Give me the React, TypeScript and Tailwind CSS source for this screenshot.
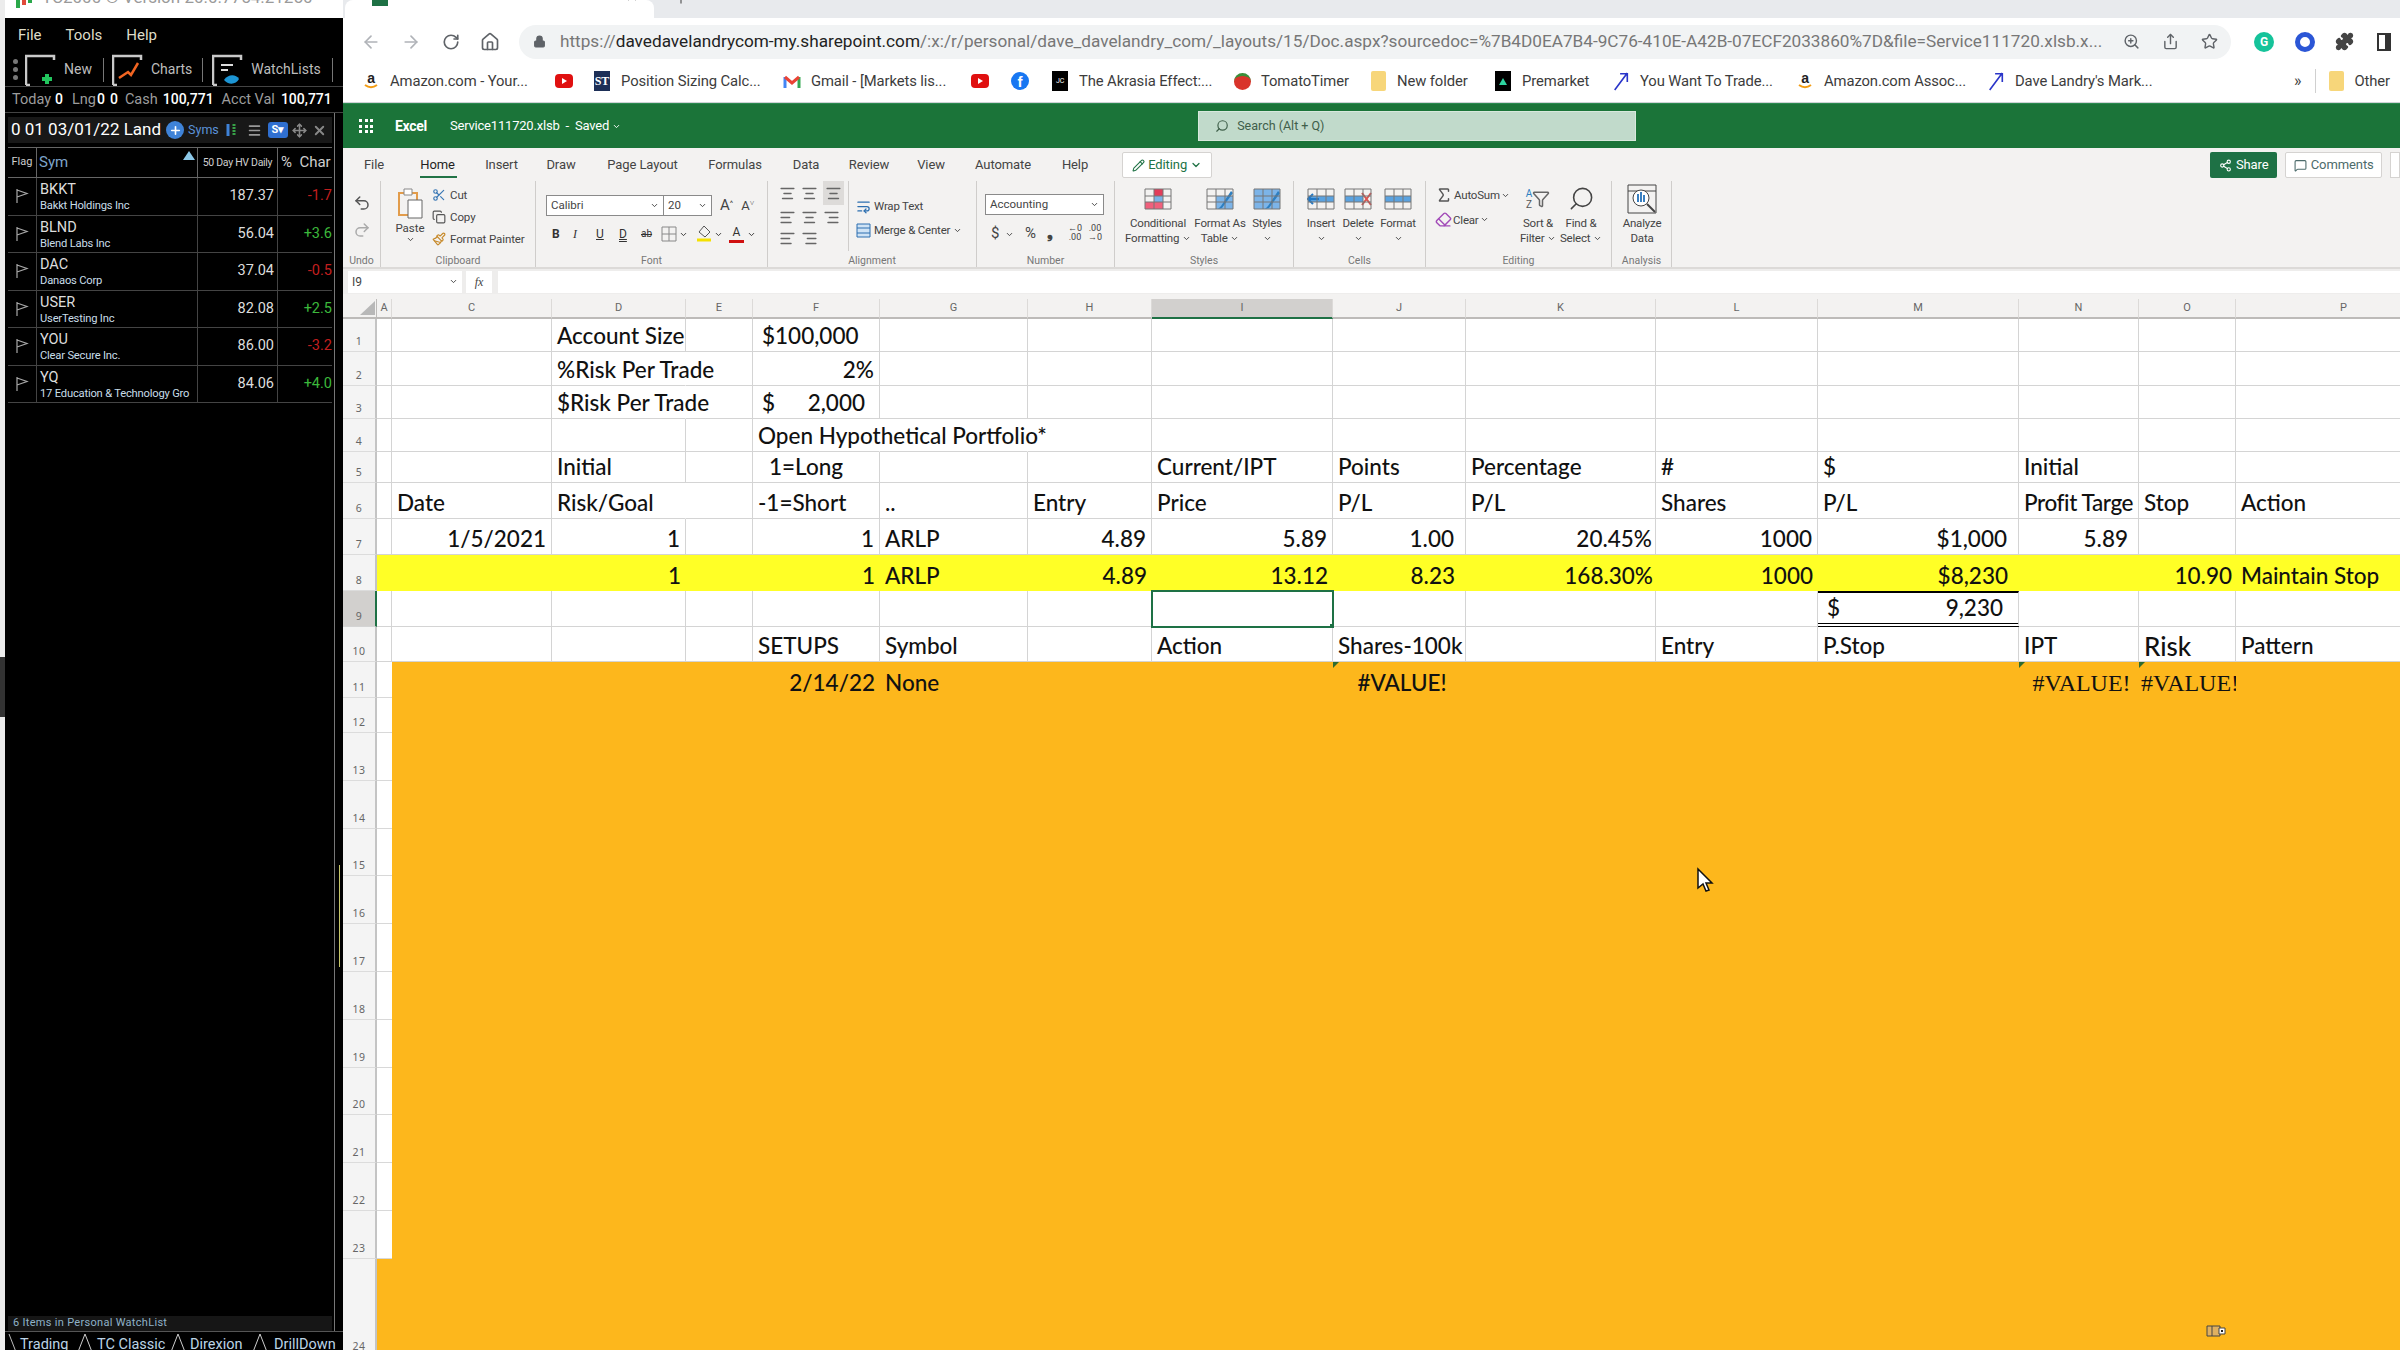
import { ReactNode } from "react"
import {
  ArrowLeft, ArrowRight, RotateCw, Home, Lock, ZoomIn, Share, Star, Puzzle, ChevronDown, Search,
  Undo2, Redo2, Scissors, Copy, Paintbrush, WrapText, Pencil, Share2, MessageSquare, Eraser,
  AlignCenter, AlignLeft, AlignRight, Menu, Move, X, Plus, Sigma, Filter,
} from "lucide-react"

// ---------- left panel data ----------
const watchRows = [
  { sym: "BKKT", name: "Bakkt Holdings Inc", hv: "187.37", chg: "-1.7" },
  { sym: "BLND", name: "Blend Labs Inc", hv: "56.04", chg: "+3.6" },
  { sym: "DAC", name: "Danaos Corp", hv: "37.04", chg: "-0.5" },
  { sym: "USER", name: "UserTesting Inc", hv: "82.08", chg: "+2.5" },
  { sym: "YOU", name: "Clear Secure Inc.", hv: "86.00", chg: "-3.2" },
  { sym: "YQ", name: "17 Education & Technology Gro", hv: "84.06", chg: "+4.0" },
]

function FlagIcon() {
  return (
    <svg width="14" height="16" viewBox="0 0 14 16" fill="none" stroke="#a8a8a8" strokeWidth="1.2">
      <path d="M2 1v14M2 2l10 3.5L2 9" />
    </svg>
  )
}

function Bracket({ children }: { children: ReactNode }) {
  return (
    <svg width="32" height="32" viewBox="0 0 32 32" fill="none">
      <path d="M1 31V2h28v4M1 31h4" stroke="#c9c9c9" strokeWidth="2.5" />
      {children}
    </svg>
  )
}

function LeftPanel() {
  return (
    <div className="flex h-full w-[343px] shrink-0">
      <div className="flex w-[5px] flex-col bg-[#ececec]">
        <div className="h-[657px]" />
        <div className="h-[60px] bg-[#333333]" />
      </div>
      <div className="flex h-full w-[338px] flex-col bg-black font-[Roboto] text-[#e0e0e0]">
        <div className="flex h-[18px] items-start overflow-hidden bg-white pl-[10px] text-[17px] leading-[20px] text-[#9a9a9a]">
          <svg className="mr-[9px] shrink-0" width="18" height="8" viewBox="0 0 18 8"><path d="M1 0h4v8H1z" fill="#2aa84a" /><path d="M7 0h4v5H7z" fill="#e04a3a" /><path d="M13 0h4v3h-4z" fill="#2aa84a" /></svg>
          <span className="-translate-y-[13px]">TC2000 © Version 20.0.7754.21250</span>
        </div>
        <div className="flex h-[35px] items-center gap-[24px] pl-[13px] text-[15px] text-[#dedcc8]">
          <span>File</span><span>Tools</span><span>Help</span>
        </div>
        <div className="flex h-[34px] items-center border-b border-[#444] pl-[8px] text-[14px] text-[#bdbdbd]">
          <div className="mr-[7px] flex flex-col gap-[3px]">
            <i className="size-[5px] rounded-full bg-[#777]" /><i className="size-[5px] rounded-full bg-[#777]" /><i className="size-[5px] rounded-full bg-[#777]" />
          </div>
          <Bracket><path d="M22 20v10M17 25h10" stroke="#22c55e" strokeWidth="4" /></Bracket>
          <span className="ml-[7px] mr-[11px]">New</span>
          <i className="mr-[8px] h-[24px] w-px bg-[#777]" />
          <Bracket><path d="M7 24l9-6 3 3 7-12" stroke="#f26522" strokeWidth="2.5" /></Bracket>
          <span className="ml-[7px] mr-[10px]">Charts</span>
          <i className="mr-[9px] h-[24px] w-px bg-[#777]" />
          <Bracket>
            <path d="M9 11h12M9 16h7" stroke="#ddd" strokeWidth="2" />
            <path d="M12 26c4-6 12-6 15-1-3 6-11 6-15 1z" fill="#1c95d4" />
          </Bracket>
          <span className="ml-[7px] mr-[11px]">WatchLists</span>
          <i className="h-[24px] w-px bg-[#777]" />
        </div>
        <div className="flex h-[26px] items-center whitespace-nowrap border-b border-[#444] pl-[7px] text-[14.5px] text-[#9c9c9c]">
          <span>Today</span><b className="ml-[4px] text-[14px] font-medium text-white">0</b>
          <span className="ml-[9px]">Lng</span><b className="ml-[1px] text-[14px] font-medium text-white">0</b><b className="ml-[5px] text-[14px] font-medium text-white">0</b>
          <span className="ml-[7px]">Cash</span><b className="ml-[5px] text-[14px] font-medium text-white">100,771</b>
          <span className="ml-[8px]">Acct Val</span><b className="ml-[6px] text-[14px] font-medium text-white">100,771</b>
        </div>
        <div className="flex min-h-0 flex-1 border-r-0">
          <div className="flex w-[330px] flex-col border-r border-[#777]">
            <div className="ml-[3px] mt-[4px] flex h-[26px] w-[324px] items-center bg-[#181818] pl-[3px]">
              <span className="whitespace-nowrap text-[17px] text-white">0 01 03/01/22 Land</span>
              <span className="ml-[5px] flex size-[18px] items-center justify-center rounded-full bg-[#3f83d8]"><Plus size={13} strokeWidth={3} color="#fff" /></span>
              <span className="ml-[4px] text-[12.5px] text-[#5b93d8]">Syms</span>
              <svg className="ml-[6px]" width="14" height="14" viewBox="0 0 14 14">
                <path d="M3 1v12" stroke="#3f83d8" strokeWidth="3" /><path d="M9 1v12" stroke="#37a047" strokeWidth="3" strokeDasharray="2 1" />
              </svg>
              <Menu className="ml-[8px]" size={15} color="#999" strokeWidth={2.5} />
              <span className="ml-[6px] flex h-[16px] w-[20px] items-center justify-center rounded-[3px] bg-[#2f6fd0] text-[11px] font-bold text-white">S▾</span>
              <Move className="ml-[4px]" size={15} color="#888" strokeWidth={2.5} />
              <X className="ml-[5px]" size={15} color="#888" strokeWidth={3} />
            </div>
            <div className="ml-[3px] mt-[4px] flex h-[31px] w-[324px] border-y border-[#666] text-[#cfcfcf]">
              <div className="flex w-[29px] items-center justify-center border-r border-[#666] text-[11px]">Flag</div>
              <div className="relative flex w-[161px] items-center border-r border-[#666] pl-[2px] text-[15px] text-[#7da4c9]">
                Sym
                <i className="absolute right-[2px] top-[3px] h-0 w-0 border-x-[6px] border-b-[9px] border-x-transparent border-b-[#8cc8e8]" />
              </div>
              <div className="flex w-[80px] items-center justify-center whitespace-nowrap border-r border-[#666] text-[10.5px] tracking-[-0.3px]">50 Day HV Daily</div>
              <div className="flex flex-1 items-center overflow-hidden whitespace-nowrap pl-[3px] text-[15px]">%&nbsp;&nbsp;Char</div>
            </div>
            {watchRows.map((row) => (
              <div key={row.sym} className="ml-[3px] flex h-[37.5px] w-[324px] border-b border-[#444]">
                <div className="flex w-[29px] items-center justify-center border-r border-[#444]"><FlagIcon /></div>
                <div className="flex w-[161px] flex-col justify-center border-r border-[#444] pl-[3px] pt-[2px]">
                  <span className="text-[14.5px] leading-[17px] text-[#ddd]">{row.sym}</span>
                  <span className="whitespace-nowrap text-[11.2px] leading-[15px] tracking-[-0.2px] text-[#c8dde8]">{row.name}</span>
                </div>
                <div className="flex w-[80px] items-center justify-end border-r border-[#444] pr-[3px] text-[14.5px] text-[#ddd]">{row.hv}</div>
                <div className={row.chg[0] === "-" ? "flex flex-1 items-center justify-end overflow-hidden text-[14.5px] text-[#c21f1f]" : "flex flex-1 items-center justify-end overflow-hidden text-[14.5px] text-[#3cb83c]"}>{row.chg}</div>
              </div>
            ))}
            <div className="flex-1" />
            <div className="ml-[3px] flex h-[15px] w-[324px] items-center bg-[#161616] pl-[5px] text-[11px] tracking-[0.3px] text-[#8fb2c8]">6 Items in Personal WatchList</div>
          </div>
          <div className="flex flex-1 justify-center pt-[810px]">
            <i className="mt-[-58px] h-[102px] w-px bg-[#c8c86a]" />
          </div>
        </div>
        <div className="flex h-[19px] items-start overflow-hidden border-t border-[#555] pl-[3px] pt-[2px] text-[14.5px] text-[#bcd4e6]">
          <svg className="shrink-0" width="12" height="18"><path d="M1 0l7 18" stroke="#bbb" /></svg>
          <span className="w-[57px] shrink-0">Trading</span>
          <TabPeak />
          <span className="ml-[4px] w-[73px] shrink-0 whitespace-nowrap">TC Classic</span>
          <TabPeak />
          <span className="ml-[4px] w-[62px] shrink-0">Direxion</span>
          <TabPeak />
          <span className="ml-[6px] shrink-0">DrillDown</span>
        </div>
      </div>
    </div>
  )
}

function TabPeak() {
  return (
    <svg className="shrink-0" width="16" height="18"><path d="M1 18L8 0l7 18z" fill="#000" stroke="#ccc" /></svg>
  )
}

// ---------- chrome ----------
function Fav({ children }: { children: ReactNode }) {
  return <span className="flex h-[18px] w-[18px] shrink-0 items-center justify-center">{children}</span>
}
const AmazonIcon = (
  <Fav>
    <svg width="16" height="20" viewBox="0 0 16 20">
      <text x="8" y="12" textAnchor="middle" fontFamily="Liberation Sans" fontWeight="700" fontSize="14" fill="#222">a</text>
      <path d="M2 14c4 3 8 3 12 0" stroke="#f39c12" strokeWidth="2" fill="none" />
    </svg>
  </Fav>
)
const YoutubeIcon = (
  <Fav>
    <span className="flex h-[14px] w-[19px] items-center justify-center rounded-[4px] bg-[#e01010]">
      <i className="h-0 w-0 border-y-[3px] border-l-[5px] border-y-transparent border-l-white" />
    </span>
  </Fav>
)
const ArrowIcon = (
  <Fav>
    <svg width="20" height="22" viewBox="0 0 20 22" fill="none" stroke="#2a35c9" strokeWidth="1.8"><path d="M3 21L17 2M9 3h8v9" /></svg>
  </Fav>
)
const FolderIcon = <Fav><span className="block h-[20px] w-[15px] rounded-[2px] bg-[#f7d67a]" /></Fav>

const bookmarks: { w: string; icon: ReactNode; label?: string }[] = [
  { w: "w-[193px]", icon: AmazonIcon, label: "Amazon.com - Your..." },
  { w: "w-[38px]", icon: YoutubeIcon },
  { w: "w-[190px]", icon: <Fav><span className="flex h-[20px] w-[16px] items-center justify-center bg-[#1d2f57] font-['Liberation_Serif'] text-[12px] font-bold text-white">ST</span></Fav>, label: "Position Sizing Calc..." },
  { w: "w-[188px]", icon: <Fav><svg width="18" height="14" viewBox="0 0 18 14" fill="none" strokeWidth="3"><path d="M2 14V3" stroke="#4285f4" /><path d="M16 14V3" stroke="#34a853" /><path d="M2 3l7 6 7-6" stroke="#ea4335" /></svg></Fav>, label: "Gmail - [Markets lis..." },
  { w: "w-[40px]", icon: YoutubeIcon },
  { w: "w-[40px]", icon: <Fav><span className="flex size-[18px] items-center justify-center rounded-full bg-[#1877f2] font-['Liberation_Sans'] text-[15px] font-bold leading-none text-white">f</span></Fav> },
  { w: "w-[182px]", icon: <Fav><span className="flex h-[20px] w-[16px] items-center justify-center bg-black text-[7px] text-white">JC</span></Fav>, label: "The Akrasia Effect:..." },
  { w: "w-[136px]", icon: <Fav><span className="size-[17px] rounded-full border-t-[3px] border-[#3a8f3a] bg-[#d9342b]" /></Fav>, label: "TomatoTimer" },
  { w: "w-[125px]", icon: FolderIcon, label: "New folder" },
  { w: "w-[118px]", icon: <Fav><span className="flex h-[20px] w-[16px] items-center justify-center bg-black"><i className="h-0 w-0 border-x-[4px] border-b-[7px] border-x-transparent border-b-[#2dd4a0]" /></span></Fav>, label: "Premarket" },
  { w: "w-[184px]", icon: ArrowIcon, label: "You Want To Trade..." },
  { w: "w-[191px]", icon: AmazonIcon, label: "Amazon.com Assoc..." },
  { w: "w-[309px]", icon: ArrowIcon, label: "Dave Landry's Mark..." },
]

function Chrome() {
  return (
    <div className="shrink-0 bg-white font-[Roboto]">
      <div className="flex h-[18px] bg-[#e8eaed]">
        <div className="ml-[2px] flex h-full w-[309px] items-start overflow-hidden rounded-t-[8px] bg-white pl-[27px] text-[16px] leading-[20px] text-[#555]">
          <i className="h-[6px] w-[16px] bg-[#1e7145]" />
          <span className="ml-[12px] w-[190px] -translate-y-[17px] whitespace-nowrap">Service111720.xlsb...</span>
          <X className="-translate-y-[9px] ml-[36px]" size={12} color="#555" />
        </div>
        <Plus className="ml-[20px] -translate-y-[8px]" size={14} color="#555" />
      </div>
      <div className="flex h-[42px] items-center pt-[5px] text-[#5f6368]">
        <ArrowLeft className="ml-[18px] text-[#b0b3b8]" size={20} />
        <ArrowRight className="ml-[20px] text-[#b0b3b8]" size={20} />
        <RotateCw className="ml-[21px]" size={18} strokeWidth={2.2} />
        <Home className="ml-[20px]" size={20} />
        <div className="ml-[19px] flex h-[34px] w-[1712px] shrink-0 items-center rounded-full bg-[#f1f3f4] pl-[14px]">
          <Lock size={13} fill="#5f6368" />
          <span className="ml-[14px] w-[1546px] overflow-hidden whitespace-nowrap text-[17.2px] text-[#777]">
            https://<span className="text-[#222]">davedavelandrycom-my.sharepoint.com</span>/:x:/r/personal/dave_davelandry_com/_layouts/15/Doc.aspx?sourcedoc=%7B4D0EA7B4-9C76-410E-A42B-07ECF2033860%7D&file=Service111720.xlsb.x...
          </span>
          <ZoomIn className="ml-[17px]" size={17} />
          <Share className="ml-[22px]" size={17} />
          <Star className="ml-[22px]" size={17} />
        </div>
        <span className="ml-[23px] flex size-[20px] shrink-0 items-center justify-center rounded-full bg-[#15c39a] text-[12px] font-bold text-white">G</span>
        <span className="ml-[21px] flex size-[20px] shrink-0 items-center justify-center rounded-full border-[5px] border-[#2b56d6] bg-white" />
        <Puzzle className="ml-[20px] shrink-0" size={19} fill="#444" color="#444" />
        <span className="ml-[23px] block h-[18px] w-[14px] shrink-0 border-2 border-r-[6px] border-[#333]" />
      </div>
      <div className="flex h-[43px] items-center border-b border-[#cfd3d6] pl-[19px] text-[14.8px] tracking-[-0.1px] text-[#3c3c3c]">
        {bookmarks.map((b, i) => (
          <div key={i} className={`flex shrink-0 items-center gap-[10px] whitespace-nowrap ${b.w}`}>
            {b.icon}
            {b.label && <span>{b.label}</span>}
          </div>
        ))}
        <span className="ml-[-2px] text-[16px]">»</span>
        <i className="ml-[14px] h-[24px] w-px bg-[#d0d0d0]" />
        <span className="ml-[11px]">{FolderIcon}</span>
        <span className="ml-[9px]">Other</span>
      </div>
    </div>
  )
}

// ---------- excel ribbon ----------
const ribbonTabs = ["File", "Home", "Insert", "Draw", "Page Layout", "Formulas", "Data", "Review", "View", "Automate", "Help"]
const tabWidths = ["w-[58px]", "w-[69px]", "w-[59px]", "w-[60px]", "w-[103px]", "w-[82px]", "w-[60px]", "w-[66px]", "w-[58px]", "w-[86px]", "w-[58px]"]

const Chev = ({ size = 9 }: { size?: number }) => <ChevronDown className="inline-block" size={size} strokeWidth={2.5} />

function Group({ w, label, children }: { w: string; label: string; children: ReactNode }) {
  return (
    <div className={`flex h-[86px] shrink-0 flex-col border-r border-[#cfcdcb] ${w}`}>
      <div className="min-h-0 flex-1">{children}</div>
      <div className="text-center text-[10.5px] leading-[13px] text-[#777]">{label}</div>
    </div>
  )
}

function BigBtn({ w, icon, l1, l2, chev }: { w: string; icon: ReactNode; l1: string; l2?: string; chev?: boolean }) {
  return (
    <div className={`flex shrink-0 flex-col items-center text-[11.5px] leading-[15px] tracking-[-0.2px] ${w}`}>
      <div className="flex h-[35px] items-center">{icon}</div>
      <span className="whitespace-nowrap">{l1}</span>
      <span className="whitespace-nowrap">{l2} {chev && <Chev />}</span>
    </div>
  )
}

const gridLines = "M1 1h26v20H1zM1 8h26M1 14h26M10 1v20M19 1v20"
function CellIcon({ children }: { children?: ReactNode }) {
  return (
    <svg width="28" height="22" viewBox="0 0 28 22" fill="none">
      {children}
      <path d={gridLines} stroke="#777" strokeWidth="1" />
    </svg>
  )
}
const brush = <path d="M25 3L15 18l-3 3 4-1L27 5z" fill="#2d7fc1" />

function Ribbon() {
  return (
    <div className="shrink-0 bg-[#f3f2f1] font-[Roboto] text-[#444]">
      <div className="flex h-[30px] items-end text-[13px] tracking-[-0.1px]">
        <div className="ml-[2px] flex">
          {ribbonTabs.map((t, i) => (
            <div key={t} className={`relative flex h-[26px] items-center justify-center ${tabWidths[i]} ${t === "Home" ? "text-[#1f1f1f]" : ""}`}>
              {t}
              {t === "Home" && <i className="absolute bottom-0 left-[17px] right-[15px] h-[2px] bg-[#217346]" />}
            </div>
          ))}
        </div>
        <div className="ml-[18px] flex h-[26px] w-[93px] items-center justify-center gap-[3px] rounded-[2px] border border-[#d5d3d1] bg-white text-[#217346]">
          <Pencil size={13} /> Editing <Chev size={12} />
        </div>
        <div className="ml-[998px] flex h-[26px] w-[69px] items-center justify-center gap-[4px] rounded-[2px] bg-[#1e7145] text-white"><Share2 size={13} />Share</div>
        <div className="ml-[8px] flex h-[26px] w-[100px] items-center justify-center gap-[4px] rounded-[2px] border border-[#d5d3d1] bg-white text-[#4d6b6b]"><MessageSquare size={13} />Comments</div>
        <div className="ml-[8px] h-[26px] w-[10px] border border-[#d5d3d1] bg-white" />
      </div>
      <div className="flex h-[91px] items-start border-b-2 border-[#dcdad8] pt-[3px]">
        <Group w="w-[38px]" label="Undo">
          <div className="flex flex-col items-center gap-[9px] pt-[13px]">
            <Undo2 size={18} color="#555" />
            <Redo2 size={18} color="#aaa" />
          </div>
        </Group>
        <Group w="w-[155px]" label="Clipboard">
          <div className="flex pt-[6px]">
            <div className="ml-[10px] flex w-[38px] flex-col items-center text-[11.5px] leading-[14px]">
              <svg width="30" height="34" viewBox="0 0 30 34" fill="none">
                <path d="M4 6h18v22H4z" stroke="#e29c4b" strokeWidth="2" /><path d="M9 2h8v6H9z" fill="#fff" stroke="#888" /><path d="M13 13h14v18H13z" fill="#fff" stroke="#666" />
              </svg>
              <span>Paste</span>
              <Chev />
            </div>
            <div className="ml-[3px] flex flex-col gap-[6px] text-[11.5px] leading-[16px] tracking-[-0.1px]">
              <div className="flex items-center gap-[4px]"><Scissors size={14} color="#3a78b5" />Cut</div>
              <div className="flex items-center gap-[4px]"><Copy size={14} color="#555" />Copy</div>
              <div className="flex items-center gap-[4px]"><Paintbrush size={14} color="#c78a2b" />Format Painter</div>
            </div>
          </div>
        </Group>
        <Group w="w-[232px]" label="Font">
          <div className="pl-[10px] pt-[13px]">
            <div className="flex items-center">
              <div className="flex h-[21px] w-[118px] items-center justify-between border border-[#8a8a8a] bg-white px-[4px] text-[11.5px]">Calibri <Chev /></div>
              <div className="flex h-[21px] w-[48px] items-center justify-between border border-l-0 border-[#8a8a8a] bg-white px-[4px] text-[11.5px]">20 <Chev /></div>
              <span className="ml-[8px] text-[15px]">A<sup className="text-[8px]">^</sup></span>
              <span className="ml-[8px] text-[13px]">A<sup className="text-[8px]">˅</sup></span>
            </div>
            <div className="mt-[8px] flex items-center pl-[6px] text-[12px] text-[#333]">
              <b className="w-[21px]">B</b>
              <i className="w-[23px] font-['Liberation_Serif']">I</i>
              <u className="w-[23px]">U</u>
              <u className="w-[22px] decoration-double">D</u>
              <s className="w-[20px] text-[10px]">ab</s>
              <svg width="16" height="16" viewBox="0 0 16 16" fill="none" stroke="#888"><path d="M1 1h14v14H1zM8 1v14M1 8h14" /></svg>
              <span className="ml-[2px] mr-[8px]"><Chev /></span>
              <svg width="16" height="18" viewBox="0 0 16 18" fill="none"><path d="M8 1l6 6-5 5-6-5z" stroke="#555" /><path d="M1 15h14" stroke="#f4e100" strokeWidth="3" /></svg>
              <span className="ml-[2px] mr-[6px]"><Chev /></span>
              <span className="relative flex h-[18px] w-[15px] justify-center text-[12px] leading-[14px] after:absolute after:bottom-0 after:h-[3px] after:w-full after:bg-[#d01010]">A</span>
              <span className="ml-[3px]"><Chev /></span>
            </div>
          </div>
        </Group>
        <Group w="w-[209px]" label="Alignment">
          <div className="flex pl-[11px]">
            <div className="flex w-[69px] flex-col gap-[4px] text-[#666]">
              <div className="flex items-center gap-[5px]">
                <AlignCenter size={17} /><AlignCenter size={17} />
                <span className="flex h-[24px] w-[21px] items-center justify-center bg-[#dddbd9]"><AlignCenter size={17} /></span>
              </div>
              <div className="flex gap-[5px]"><AlignLeft size={17} /><AlignCenter size={17} /><AlignRight size={17} /></div>
              <div className="flex gap-[5px]"><AlignLeft size={17} /><AlignRight size={17} /></div>
            </div>
            <div className="flex h-[70px] flex-col gap-[8px] border-l border-[#cfcdcb] pl-[7px] pt-[17px] text-[11.5px] leading-[16px] tracking-[-0.2px]">
              <div className="flex items-center gap-[3px]"><WrapText size={15} color="#2d6fb0" />Wrap Text</div>
              <div className="flex items-center gap-[3px]">
                <svg width="15" height="15" viewBox="0 0 15 15" fill="#cfe3f5" stroke="#2d6fb0"><path d="M1 1h13v13H1zM1 5h13M1 10h13" /></svg>
                Merge &amp; Center <Chev />
              </div>
            </div>
          </div>
        </Group>
        <Group w="w-[138px]" label="Number">
          <div className="pl-[8px] pt-[13px]">
            <div className="flex h-[21px] w-[119px] items-center justify-between border border-[#8a8a8a] bg-white px-[4px] text-[11.5px]">Accounting <Chev /></div>
            <div className="mt-[7px] flex items-center pl-[6px] text-[15px] text-[#444]">
              <span className="w-[14px]">$</span><span className="w-[20px]"><Chev /></span>
              <span className="w-[22px]">%</span><span className="w-[17px] font-bold">❟</span>
              <span className="w-[22px] text-center text-[9px] leading-[9px]">←0<br />.00</span>
              <span className="w-[18px] text-center text-[9px] leading-[9px]">.00<br />→0</span>
            </div>
          </div>
        </Group>
        <Group w="w-[179px]" label="Styles">
          <div className="flex pl-[7px]">
            <BigBtn w="w-[72px]" l1="Conditional" l2="Formatting" chev icon={<CellIcon><path d="M10 1h9v7h-9z" fill="#e23d5a" /><path d="M10 8h9v6h-9z" fill="#7cb4e8" /><path d="M1 14h18v7H1z" fill="#f0607c" /></CellIcon>} />
            <BigBtn w="w-[52px]" l1="Format As" l2="Table" chev icon={<CellIcon><path d="M10 8h17v13H10z" fill="#7cb4e8" />{brush}</CellIcon>} />
            <BigBtn w="w-[42px]" l1="Styles" l2="" chev icon={<CellIcon><path d="M1 1h26v20H1z" fill="#7cb4e8" />{brush}</CellIcon>} />
          </div>
        </Group>
        <Group w="w-[132px]" label="Cells">
          <div className="flex pl-[9px]">
            <BigBtn w="w-[36px]" l1="Insert" l2="" chev icon={<CellIcon><path d="M1 8h26v6H1z" fill="#5aa2e0" /><path d="M12 11H2M6 6l-5 5 5 5" stroke="#1f78c8" strokeWidth="2" /></CellIcon>} />
            <BigBtn w="w-[38px]" l1="Delete" l2="" chev icon={<CellIcon><path d="M1 8h18v6H1z" fill="#5aa2e0" /><path d="M18 5l9 12M27 5l-9 12" stroke="#d9534f" strokeWidth="2" /></CellIcon>} />
            <BigBtn w="w-[42px]" l1="Format" l2="" chev icon={<CellIcon><path d="M1 8h26v6H1z" fill="#5aa2e0" /></CellIcon>} />
          </div>
        </Group>
        <Group w="w-[186px]" label="Editing">
          <div className="flex pl-[9px]">
            <div className="flex w-[81px] flex-col gap-[7px] pt-[5px] text-[11.5px] leading-[16px] tracking-[-0.2px]">
              <div className="flex items-center gap-[1px]"><Sigma size={18} color="#555" />AutoSum <Chev /></div>
              <div className="flex items-center gap-[1px]"><Eraser size={17} color="#a24bb8" />Clear <Chev /></div>
            </div>
            <BigBtn w="w-[44px]" l1="Sort &" l2="Filter" chev icon={<span className="flex items-center text-[10px] leading-[11px]"><span className="text-center text-[#2d7fc1]">A<br /><span className="text-[#555]">Z</span></span><Filter size={18} color="#666" /></span>} />
            <BigBtn w="w-[42px]" l1="Find &" l2="Select" chev icon={<Search className="-scale-x-100" size={27} color="#444" strokeWidth={1.4} />} />
          </div>
        </Group>
        <Group w="w-[60px]" label="Analysis">
          <BigBtn w="w-[60px]" l1="Analyze" l2="Data" icon={
            <svg width="30" height="30" viewBox="0 0 30 30" fill="none" stroke="#444">
              <path d="M1 1h28v28H1zM1 7h28" /><circle cx="14" cy="14" r="8" fill="#fff" /><path d="M11 10v8M14 8v10M17 11v7" stroke="#3a7fc0" strokeWidth="2" /><path d="M20 20l8 8" strokeWidth="2" />
            </svg>
          } />
        </Group>
      </div>
      <div className="flex h-[25px] items-center gap-[4px] bg-[#eeedec] pl-[5px]">
        <div className="flex h-[22px] w-[114px] items-center justify-between bg-white px-[4px] text-[12px]">I9 <Chev /></div>
        <div className="flex h-[22px] w-[26px] items-center justify-center bg-white font-['Liberation_Serif'] text-[12px] italic">fx</div>
        <div className="ml-[2px] h-[22px] flex-1 bg-white" />
      </div>
    </div>
  )
}

// ---------- sheet ----------
type Cell = { t?: string; acct?: string; c?: string }
const R = "justify-end pr-[5px]"
const sheetCols = ["A", "C", "D", "E", "F", "G", "H", "I", "J", "K", "L", "M", "N", "O", "P"]
const valueCell = "justify-center pl-0 font-['Liberation_Serif'] text-[24px]"

const sheet: Record<number, Record<string, Cell>> = {
  1: { D: { t: "Account Size" }, F: { t: "$100,000", c: "pl-[9px]" } },
  2: { D: { t: "%Risk Per Trade", c: "z-[1] border-r-transparent" }, F: { t: "2%", c: R } },
  3: { D: { t: "$Risk Per Trade", c: "z-[1] border-r-transparent" }, F: { acct: "2,000", c: "pl-[9px] pr-[14px]" } },
  4: { F: { t: "Open Hypothetical Portfolio*", c: "z-[1] border-r-transparent" }, G: { c: "border-r-transparent" } },
  5: { D: { t: "Initial" }, F: { t: "1=Long", c: "pl-[16px]" }, I: { t: "Current/IPT" }, J: { t: "Points" }, K: { t: "Percentage" }, L: { t: "#" }, M: { t: "$" }, N: { t: "Initial" } },
  6: { C: { t: "Date" }, D: { t: "Risk/Goal", c: "border-r-transparent" }, F: { t: "-1=Short" }, G: { t: ".." }, H: { t: "Entry" }, I: { t: "Price" }, J: { t: "P/L" }, K: { t: "P/L" }, L: { t: "Shares" }, M: { t: "P/L" }, N: { t: "Profit Targe", c: "overflow-hidden tracking-[-0.4px]" }, O: { t: "Stop", c: "pl-[2px]" }, P: { t: "Action" } },
  7: { C: { t: "1/5/2021", c: R }, D: { t: "1", c: R }, F: { t: "1", c: R }, G: { t: "ARLP" }, H: { t: "4.89", c: R }, I: { t: "5.89", c: R }, J: { t: "1.00", c: "justify-end pr-[11px]" }, K: { t: "20.45%", c: "justify-end pr-[3px]" }, L: { t: "1000", c: R }, M: { t: "$1,000", c: "justify-end pr-[11px]" }, N: { t: "5.89", c: "justify-end pr-[10px]" } },
  8: { D: { t: "1", c: R }, F: { t: "1", c: R }, G: { t: "ARLP" }, H: { t: "4.89", c: R }, I: { t: "13.12", c: R }, J: { t: "8.23", c: "justify-end pr-[11px]" }, K: { t: "168.30%", c: "justify-end pr-[3px]" }, L: { t: "1000", c: R }, M: { t: "$8,230", c: "justify-end pr-[11px]" }, O: { t: "10.90", c: "justify-end pr-[4px]" }, P: { t: "Maintain Stop" } },
  9: { I: { c: "z-10 outline-2 -outline-offset-1 outline-[#1e7145]" }, M: { acct: "9,230", c: "border-t-2 border-t-black border-b-[4px] border-b-black [border-bottom-style:double] pl-[9px] pr-[15px]" } },
  10: { F: { t: "SETUPS" }, G: { t: "Symbol" }, I: { t: "Action" }, J: { t: "Shares-100k", c: "pl-[3px]" }, L: { t: "Entry" }, M: { t: "P.Stop" }, N: { t: "IPT" }, O: { t: "Risk", c: "pl-[3px] text-[26px]" }, P: { t: "Pattern" } },
  11: { F: { t: "2/14/22", c: R }, G: { t: "None" }, J: { t: "#VALUE!", c: "justify-center pl-0" }, N: { t: "#VALUE!", c: valueCell }, O: { t: "#VALUE!", c: valueCell } },
}
const errorCells = ["J", "N", "O"]
const rowNums = Array.from({ length: 24 }, (_, i) => i + 1)

function rowBg(row: number, col: string) {
  if (row === 8) return "bg-[#ffff26]"
  if (row === 24) return "bg-[#fdb71c]"
  if (row >= 11) return col === "A" ? "bg-white border-b border-[#d8d8d8]" : "bg-[#fdb71c]"
  return "bg-white border-b border-r border-[#d4d4d4]"
}

function Sheet() {
  return (
    <div className="grid min-h-0 flex-1 grid-cols-[34px_15px_160px_134px_67px_127px_148px_124px_181px_133px_190px_162px_201px_120px_97px_216px] grid-rows-[20px_33px_34px_33px_33px_31px_36px_36px_36px_36px_35px_36px_35px_repeat(11,47.8px)_98px] overflow-hidden bg-white font-[Lato] text-[22.5px] font-medium leading-[30px] text-[#111]">
      <div className="relative border-b-2 border-r border-[#bdbbb9] bg-[#f3f2f1]">
        <i className="absolute bottom-[2px] right-[1px] h-0 w-0 border-b-[14px] border-l-[15px] border-b-[#b8b8b8] border-l-transparent" />
      </div>
      {sheetCols.map((c) => (
        <div key={c} className={`flex items-center justify-center border-r border-[#dcdad8] font-[Roboto] text-[11px] font-normal text-[#666] ${c === "I" ? "border-b-2 border-b-[#1e7145] bg-[#d2d0ce]" : "border-b-2 border-b-[#bdbbb9] bg-[#f3f2f1]"}`}>{c}</div>
      ))}
      {rowNums.map((row) => (
        <div key={row} className="contents">
          <div className={`flex items-end justify-center border-b pb-[3px] font-['Noto_Sans'] text-[10.5px] font-normal leading-[14px] tracking-[0.5px] text-[#666] ${row === 9 ? "border-r-2 border-b-[#d4d4d4] border-r-[#1e7145] bg-[#d2d0ce]" : "border-r-2 border-b-[#dcdcdc] border-r-[#c4c4c4] bg-[#f4f4f4]"}`}>{row}</div>
          {sheetCols.map((col) => {
            const cell = sheet[row]?.[col]
            return (
              <div key={col} className={`relative flex items-end whitespace-nowrap pl-[5px] ${rowBg(row, col)} ${cell?.c ?? ""}`}>
                {cell?.t}
                {cell?.acct && (
                  <span className="flex w-full justify-between"><span>$</span><span>{cell.acct}</span></span>
                )}
                {row === 11 && errorCells.includes(col) && (
                  <i className="absolute left-0 top-0 h-0 w-0 border-r-[6px] border-t-[6px] border-r-transparent border-t-[#2f6b2f]" />
                )}
                {row === 9 && col === "I" && (
                  <i className="absolute -bottom-[2px] -right-[2px] size-[4px] bg-[#1e7145]" />
                )}
              </div>
            )
          })}
        </div>
      ))}
    </div>
  )
}

export default function App() {
  return (
    <div className="relative flex h-[1350px] w-[2400px] overflow-hidden bg-white">
      <LeftPanel />
      <div className="flex min-w-0 flex-1 flex-col">
        <Chrome />
        <div className="flex h-[45px] shrink-0 items-center border-t border-[#2b8a50] bg-[#1b7439] font-[Roboto] text-white">
          <div className="ml-[16px] grid grid-cols-3 gap-[2.5px]">
            {Array.from({ length: 9 }, (_, i) => <i key={i} className="size-[3px] bg-white" />)}
          </div>
          <b className="ml-[22px] text-[14px] font-bold tracking-[-0.3px]">Excel</b>
          <span className="ml-[23px] text-[13px] tracking-[-0.2px]">Service111720.xlsb&nbsp;&nbsp;-&nbsp; Saved <Chev /></span>
          <div className="ml-[577px] flex h-[30px] w-[438px] items-center gap-[8px] border border-[#d8e8dd] bg-[#c1dacb] pl-[16px] text-[12.5px] text-[#3f5f4a]">
            <Search className="-scale-x-100" size={14} /> Search (Alt + Q)
          </div>
        </div>
        <Ribbon />
        <div className="h-[5px] shrink-0 bg-[#f3f2f1]" />
        <Sheet />
      </div>
      <svg className="absolute left-[1696px] top-[867px]" width="18" height="26" viewBox="0 0 18 26">
        <path d="M2 2v19l5-4 3 7 3-1-3-7h6z" fill="#fff" stroke="#111" strokeWidth="1.5" />
      </svg>
      <svg className="absolute left-[2206px] top-[1325px]" width="20" height="12" viewBox="0 0 20 12">
        <path d="M1 1h13v10H1z" fill="#e0b060" stroke="#444" /><path d="M6 1v10" stroke="#444" /><path d="M13 3h6v6h-6z" fill="#fff" stroke="#444" /><path d="M15 5h2v2h-2z" fill="#222" />
      </svg>
    </div>
  )
}
